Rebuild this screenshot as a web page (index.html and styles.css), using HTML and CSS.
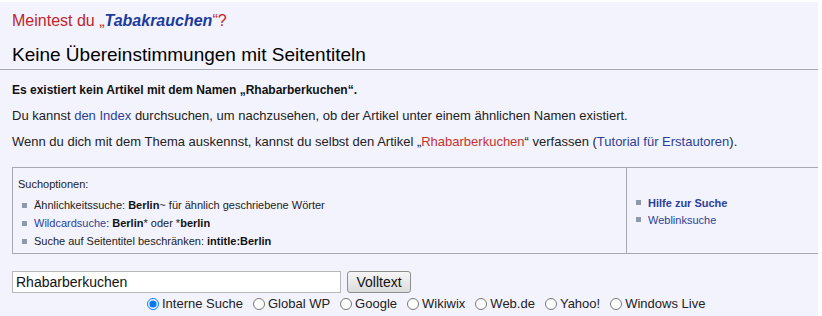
FILE: index.html
```html
<!DOCTYPE html>
<html lang="de">
<head>
<meta charset="utf-8">
<title>Suche</title>
<link rel="stylesheet" href="styles.css">
</head>
<body>
<div class="page">
  <p class="didyoumean">Meintest du „<a class="dym-link" href="#">Tabakrauchen</a>“?</p>
  <h2 class="heading">Keine Übereinstimmungen mit Seitentiteln</h2>
  <p class="notice">Es existiert kein Artikel mit dem Namen „Rhabarberkuchen“.</p>
  <p class="para">Du kannst <a class="link" href="#">den Index</a> durchsuchen, um nachzusehen, ob der Artikel unter einem ähnlichen Namen existiert.</p>
  <p class="para">Wenn du dich mit dem Thema auskennst, kannst du selbst den Artikel „<a class="new" href="#">Rhabarberkuchen</a>“ verfassen (<a class="link" href="#">Tutorial für Erstautoren</a>).</p>

  <div class="optbox">
    <div class="optleft">
      <div class="opttitle">Suchoptionen:</div>
      <ul class="optlist">
        <li>Ähnlichkeitssuche: <b>Berlin</b>~ für ähnlich geschriebene Wörter</li>
        <li><a class="link" href="#">Wildcardsuche</a>: <b>Berlin</b>* oder *<b>berlin</b></li>
        <li>Suche auf Seitentitel beschränken: <b>intitle:Berlin</b></li>
      </ul>
    </div>
    <div class="optright">
      <ul class="optlist">
        <li><a class="link strong" href="#">Hilfe zur Suche</a></li>
        <li><a class="link" href="#">Weblinksuche</a></li>
      </ul>
    </div>
  </div>

  <form class="searchform">
    <div class="searchrow">
      <input class="searchinput" type="text" value="Rhabarberkuchen">
      <button class="searchbtn" type="button">Volltext</button>
    </div>
    <div class="radios">
      <label class="radio"><input type="radio" name="engine" checked> Interne Suche</label>
      <label class="radio"><input type="radio" name="engine"> Global WP</label>
      <label class="radio"><input type="radio" name="engine"> Google</label>
      <label class="radio"><input type="radio" name="engine"> Wikiwix</label>
      <label class="radio"><input type="radio" name="engine"> Web.de</label>
      <label class="radio"><input type="radio" name="engine"> Yahoo!</label>
      <label class="radio"><input type="radio" name="engine"> Windows Live</label>
    </div>
  </form>
</div>
</body>
</html>
```

FILE: styles.css
```css
html, body {
  margin: 0;
  padding: 0;
  background: #ffffff;
}
body {
  font-family: "Liberation Sans", Arial, sans-serif;
  color: #222222;
  padding-right: 4px;
  padding-top: 2px;
}
.page {
  background: #f3f3fd;
  height: 314px;
  overflow: hidden;
}
.didyoumean {
  margin: 0;
  padding: 9px 0 0 12px;
  font-size: 16px;
  line-height: 19px;
  color: #c4232a;
}
.dym-link {
  color: #1c3b9b;
  font-weight: bold;
  font-style: italic;
  text-decoration: none;
}
.heading {
  margin: 13px 0 0 0;
  padding: 0 0 3px 12px;
  font-size: 19px;
  font-weight: normal;
  line-height: 23px;
  color: #000;
  border-bottom: 1px solid #a8a8b0;
}
.notice {
  margin: 12px 0 0 12px;
  font-size: 12px;
  font-weight: bold;
  line-height: 16px;
  color: #111;
}
.para {
  margin: 10px 0 0 12px;
  font-size: 13px;
  line-height: 16px;
}
.link {
  color: #2c3f98;
  text-decoration: none;
}
.link.strong {
  font-weight: bold;
}
.new {
  color: #c6312f;
  text-decoration: none;
}
.optbox {
  margin: 17px 0 0 12px;
  display: flex;
  border-top: 1px solid #a8a8b0;
  border-bottom: 1px solid #a8a8b0;
  border-left: 1px solid #a8a8b0;
  height: 85px;
  font-size: 11px;
}
.optleft {
  width: 614px;
  border-right: 1px solid #a8a8b0;
  padding: 9px 0 0 5px;
  box-sizing: border-box;
}
.optright {
  flex: 1;
  display: flex;
  align-items: center;
  padding: 2px 0 0 7px;
}
.opttitle {
  line-height: 14px;
}
.optlist {
  list-style: none;
  margin: 5px 0 0 0;
  padding: 0;
}
.optright .optlist {
  margin: 0;
}
.optlist li {
  line-height: 17px;
}
.optleft .optlist li {
  line-height: 18px;
}
.optlist li::before {
  content: "";
  display: inline-block;
  vertical-align: middle;
  width: 5px;
  height: 5px;
  background: #8e9aa8;
  margin: -2px 7px 0 4px;
}
.optright .optlist li::before {
  margin-left: 2px;
}
.optlist b {
  color: #111;
}
.searchform {
  margin: 17px 0 0 12px;
}
.searchrow {
  display: flex;
  gap: 6px;
  align-items: stretch;
  height: 22px;
}
.searchinput {
  width: 329px;
  box-sizing: border-box;
  border: 1px solid #b8b8b8;
  background: #fff;
  font-family: "Liberation Sans", Arial, sans-serif;
  font-size: 14px;
  padding: 0 3px;
  margin: 0;
  color: #111;
}
.searchbtn {
  width: 64px;
  box-sizing: border-box;
  border: 1px solid #8e8f8f;
  border-radius: 3px;
  background: linear-gradient(#f6f6f6, #dcdcdc);
  font-family: "Liberation Sans", Arial, sans-serif;
  font-size: 14px;
  color: #111;
  padding: 0;
  margin: 0;
}
.radios {
  display: flex;
  gap: 10px;
  padding-left: 135px;
  margin-top: 2px;
  font-size: 13px;
  line-height: 18px;
}
.radio {
  display: flex;
  align-items: center;
  gap: 3px;
}
.radio input {
  margin: 0;
  width: 12px;
  height: 12px;
}
```
